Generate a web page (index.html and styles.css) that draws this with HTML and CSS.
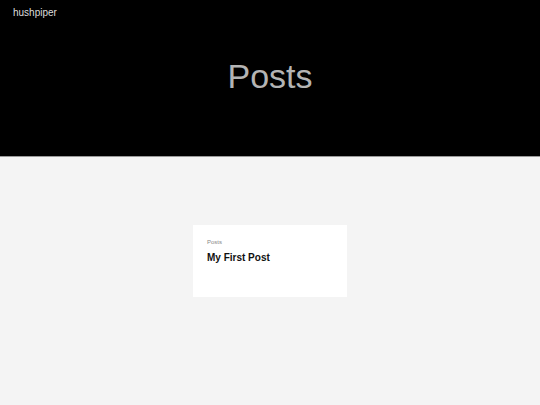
FILE: index.html
```html
<!DOCTYPE html>
<html>
<head>
<meta charset="utf-8">
<link rel="stylesheet" href="styles.css">
</head>
<body>
<header class="hero">
  <div class="brand">hushpiper</div>
  <h1 class="title">Posts</h1>
</header>
<main class="content">
  <a class="card" href="#">
    <div class="card-kicker">Posts</div>
    <div class="card-title">My First Post</div>
  </a>
</main>
</body>
</html>
```
FILE: styles.css
```css
html, body {
  margin: 0;
  padding: 0;
  height: 100%;
}
body {
  font-family: "Liberation Sans", Arial, sans-serif;
  background: #f4f4f4;
}
.hero {
  background: #000;
  height: 157px;
  border-bottom: 1px solid #9a9a9a;
  box-sizing: border-box;
  padding-top: 6px;
}
.brand {
  color: #dddddd;
  font-size: 10px;
  padding-left: 13px;
  line-height: 14px;
}
.title {
  margin: 37px 0 0;
  text-align: center;
  color: #b4b4b4;
  font-weight: normal;
  font-size: 34px;
  line-height: 38px;
}
.content {
  display: flex;
  justify-content: center;
  padding-top: 68px;
}
.card {
  display: block;
  width: 154px;
  height: 72px;
  box-sizing: border-box;
  background: #fff;
  padding: 13px 13px 13px 14px;
  text-decoration: none;
}
.card-kicker {
  font-size: 6px;
  color: #888;
  line-height: 8px;
}
.card-title {
  margin-top: 5px;
  font-size: 10px;
  font-weight: bold;
  color: #111;
  line-height: 13px;
}
```
